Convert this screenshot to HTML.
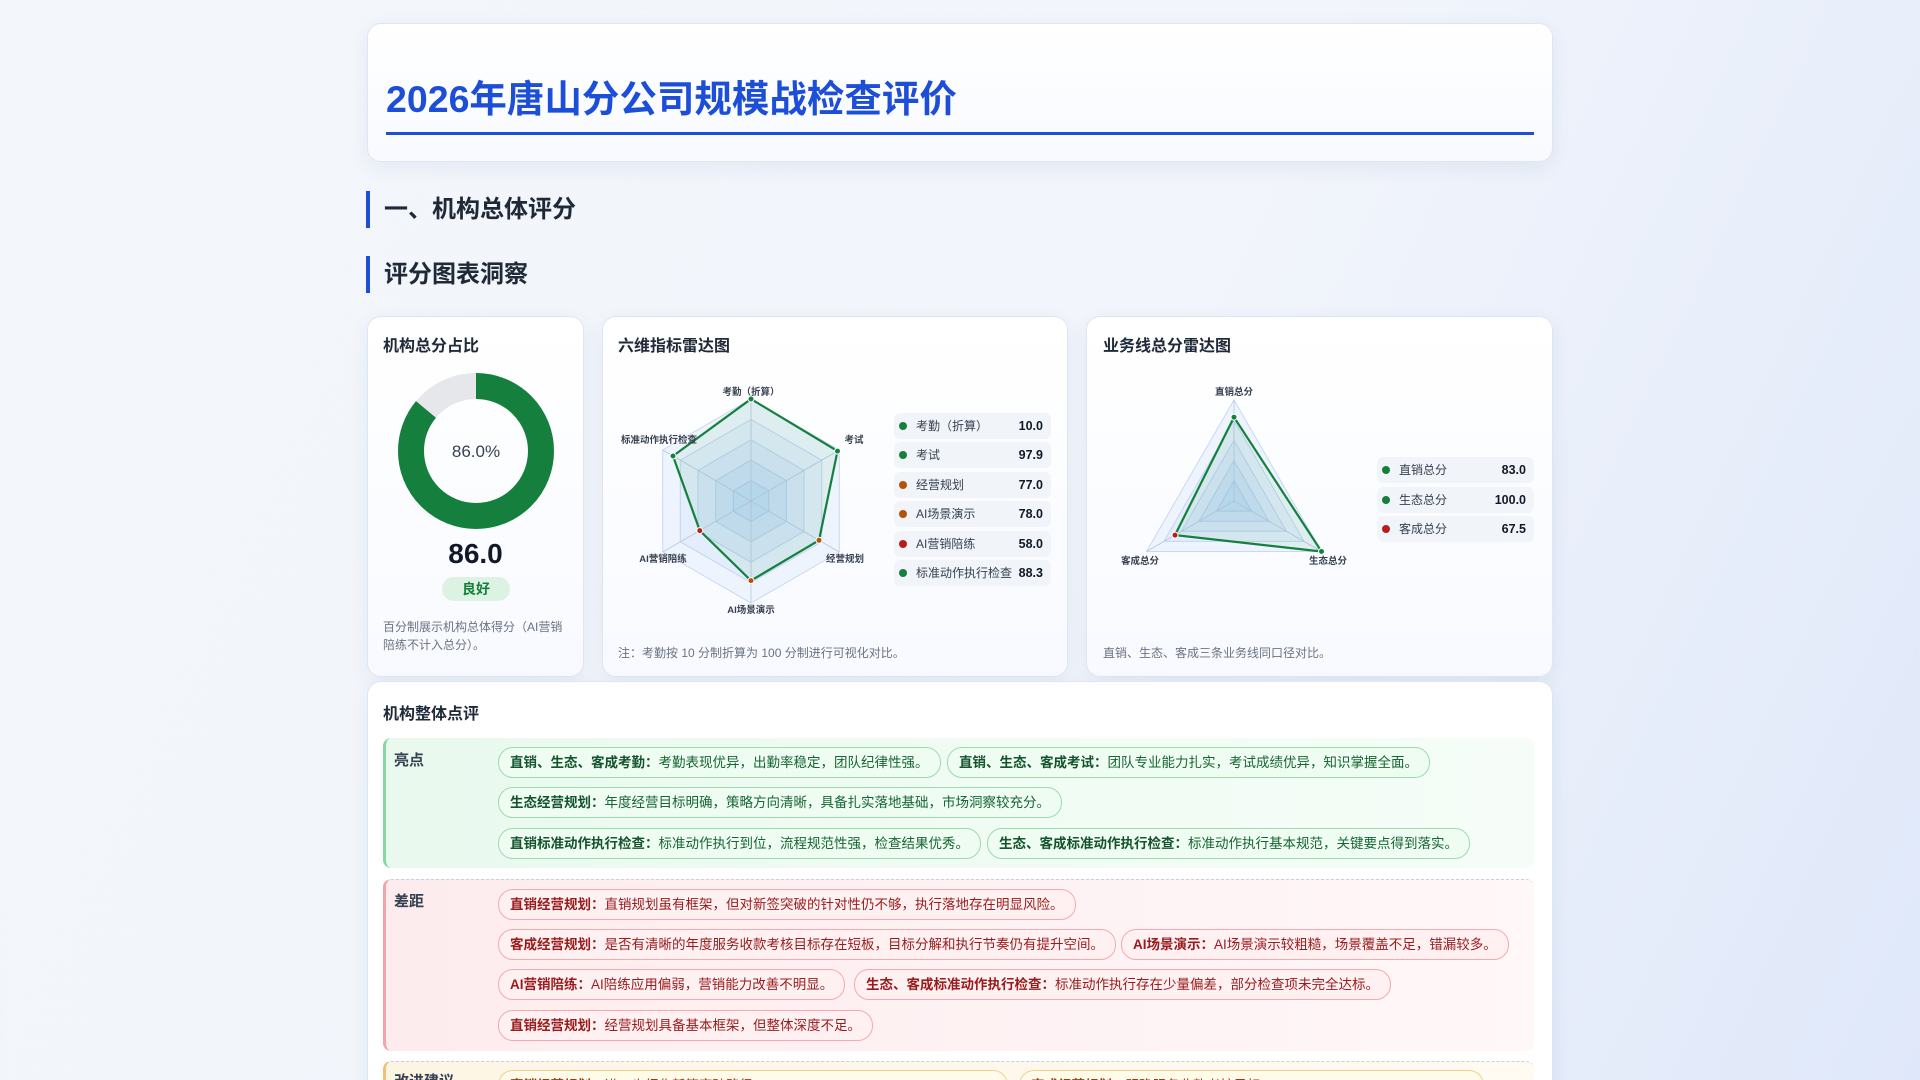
<!DOCTYPE html>
<html><head><meta charset="utf-8">
<style>
*{box-sizing:border-box;margin:0;padding:0}
html{width:1920px;height:1080px;overflow:hidden}
body{width:1920px;height:1080px;overflow:hidden;font-family:"Liberation Sans","Noto Sans CJK SC",sans-serif;background:linear-gradient(115deg,#f3f6fb 0%,#f2f5fb 55%,#dfe8fa 100%);color:#1f2937;position:relative}
.card{position:absolute;background:linear-gradient(180deg,#fff,#f8faff);border:1px solid #dde6f5;border-radius:14px;box-shadow:0 6px 20px rgba(30,60,120,.07)}
.h1{position:absolute;left:386px;top:68px;font-size:37.5px;font-weight:700;color:#1d4ed8}
.uline{position:absolute;left:386px;top:132px;width:1148px;height:3px;background:#1d4ed8}
.sec{position:absolute;left:366px;height:37px;border-left:4px solid #1d4ed8;padding-left:14px;font-size:24px;font-weight:700;color:#1f2937;line-height:37px}
.ct{position:absolute;font-size:16px;font-weight:700;color:#1f2937}
.note{position:absolute;font-size:12px;color:#6b7280;line-height:18px}
.lg{position:absolute;height:26px;background:#f1f4f9;border-radius:6px;font-size:12px;color:#374151;line-height:26px;padding-left:22px}
.lg i{position:absolute;left:5px;top:9px;width:8px;height:8px;border-radius:50%}
.lg b{position:absolute;right:8px;top:0;font-size:12.5px;color:#111827}
.blk{position:absolute;left:383px;width:1151px;border-radius:8px}
.lab{position:absolute;left:11px;font-size:15px;font-weight:700;color:#374151}
.pill{position:absolute;height:31px;border-radius:15px;font-size:13.5px;line-height:29px;padding:0 11px;white-space:nowrap}
.g{background:#eefcf2;border:1px solid #9bdcae;color:#166534}
.g b{color:#14532d}
.r{background:#fff0f1;border:1px solid #f5a9ae;color:#991b1b}
.r b{color:#991b1b}
.y{background:#fffbeb;border:1px solid #f0d089;color:#92400e}
</style></head><body>

<div class="card" style="left:367px;top:23px;width:1186px;height:139px"></div>
<div class="h1">2026年唐山分公司规模战检查评价</div>
<div class="uline"></div>

<div class="sec" style="top:191px">一、机构总体评分</div>
<div class="sec" style="top:256px">评分图表洞察</div>

<div class="card" style="left:367px;top:316px;width:217px;height:361px"></div>
<div class="ct" style="left:383px;top:332px">机构总分占比</div>
<svg style="position:absolute;left:396px;top:371px" width="160" height="160">
<circle cx="80" cy="80" r="65" fill="none" stroke="#e5e7eb" stroke-width="26"/>
<circle cx="80" cy="80" r="65" fill="none" stroke="#15803d" stroke-width="26" stroke-dasharray="351.2 408.4" transform="rotate(-90 80 80)"/>
<text x="80" y="86" text-anchor="middle" font-size="17" fill="#374151" font-family="Liberation Sans,sans-serif">86.0%</text>
</svg>
<div style="position:absolute;left:367px;width:217px;top:538px;text-align:center;font-size:28px;font-weight:700;color:#111827">86.0</div>
<div style="position:absolute;left:442px;top:577px;width:68px;height:24px;border-radius:12px;background:#dcf3e3;color:#15803d;font-size:14px;font-weight:700;text-align:center;line-height:24px">良好</div>
<div class="note" style="left:383px;top:618px;width:190px">百分制展示机构总体得分（AI营销陪练不计入总分）。</div>

<div class="card" style="left:602px;top:316px;width:466px;height:361px"></div>
<div class="ct" style="left:618px;top:332px">六维指标雷达图</div>
<svg style="position:absolute;left:601px;top:371px" width="300" height="260">
<g transform="translate(150,130)" font-size="9.5" fill="#374151" font-family="Liberation Sans,Noto Sans CJK SC,sans-serif" font-weight="700">
<polygon points="0,-102 88.3,-51 88.3,51 0,102 -88.3,51 -88.3,-51" fill="#eef4fd" stroke="#c8d8f2"/>
<polygon points="0,-81.6 70.7,-40.8 70.7,40.8 0,81.6 -70.7,40.8 -70.7,-40.8" fill="#e3edfb" stroke="#c3d5f1"/>
<polygon points="0,-61.2 53,-30.6 53,30.6 0,61.2 -53,30.6 -53,-30.6" fill="#d8e7fa" stroke="#bcd1f0"/>
<polygon points="0,-40.8 35.3,-20.4 35.3,20.4 0,40.8 -35.3,20.4 -35.3,-20.4" fill="#cde0f8" stroke="#b5cdef"/>
<polygon points="0,-20.4 17.7,-10.2 17.7,10.2 0,20.4 -17.7,10.2 -17.7,-10.2" fill="#c3dbf7" stroke="#b0c9ee"/>
<g stroke="#b8c6dc" stroke-width="0.8"><line x1="0" y1="0" x2="0" y2="-102"/><line x1="0" y1="0" x2="88.3" y2="-51"/><line x1="0" y1="0" x2="88.3" y2="51"/><line x1="0" y1="0" x2="0" y2="102"/><line x1="0" y1="0" x2="-88.3" y2="51"/><line x1="0" y1="0" x2="-88.3" y2="-51"/></g>
<polygon points="0,-102 86.5,-49.9 68,39.3 0,79.6 -51.2,29.6 -78,-45" fill="rgba(34,160,90,0.08)" stroke="#15803d" stroke-width="2.2"/>
<g stroke="#fff" stroke-width="1"><circle cx="0" cy="-102" r="3" fill="#15803d"/><circle cx="86.5" cy="-49.9" r="3" fill="#15803d"/><circle cx="68" cy="39.3" r="3" fill="#b45309"/><circle cx="0" cy="79.6" r="3" fill="#b45309"/><circle cx="-51.2" cy="29.6" r="3" fill="#b91c1c"/><circle cx="-78" cy="-45" r="3" fill="#15803d"/></g>
<text x="0" y="-106" text-anchor="middle">考勤（折算）</text>
<text x="103" y="-58" text-anchor="middle">考试</text>
<text x="94" y="61" text-anchor="middle">经营规划</text>
<text x="0" y="112" text-anchor="middle">AI场景演示</text>
<text x="-88" y="61" text-anchor="middle">AI营销陪练</text>
<text x="-92" y="-58" text-anchor="middle">标准动作执行检查</text>
</g></svg>
<div class="lg" style="left:894px;top:413px;width:157px"><i style="background:#15803d"></i>考勤（折算）<b>10.0</b></div>
<div class="lg" style="left:894px;top:442px;width:157px"><i style="background:#15803d"></i>考试<b>97.9</b></div>
<div class="lg" style="left:894px;top:472px;width:157px"><i style="background:#b45309"></i>经营规划<b>77.0</b></div>
<div class="lg" style="left:894px;top:501px;width:157px"><i style="background:#b45309"></i>AI场景演示<b>78.0</b></div>
<div class="lg" style="left:894px;top:531px;width:157px"><i style="background:#b91c1c"></i>AI营销陪练<b>58.0</b></div>
<div class="lg" style="left:894px;top:560px;width:157px"><i style="background:#15803d"></i>标准动作执行检查<b>88.3</b></div>
<div class="note" style="left:618px;top:644px">注：考勤按 10 分制折算为 100 分制进行可视化对比。</div>

<div class="card" style="left:1086px;top:316px;width:467px;height:361px"></div>
<div class="ct" style="left:1103px;top:332px">业务线总分雷达图</div>
<svg style="position:absolute;left:1084px;top:371px" width="300" height="260">
<g transform="translate(150,130)" font-size="9.5" fill="#374151" font-family="Liberation Sans,Noto Sans CJK SC,sans-serif" font-weight="700">
<polygon points="0,-101 87.5,50.5 -87.5,50.5" fill="#eef4fd" stroke="#c8d8f2"/>
<polygon points="0,-80.8 70,40.4 -70,40.4" fill="#e3edfb" stroke="#c3d5f1"/>
<polygon points="0,-60.6 52.5,30.3 -52.5,30.3" fill="#d8e7fa" stroke="#bcd1f0"/>
<polygon points="0,-40.4 35,20.2 -35,20.2" fill="#cde0f8" stroke="#b5cdef"/>
<polygon points="0,-20.2 17.5,10.1 -17.5,10.1" fill="#c3dbf7" stroke="#b0c9ee"/>
<g stroke="#b8c6dc" stroke-width="0.8"><line x1="0" y1="0" x2="0" y2="-101"/><line x1="0" y1="0" x2="87.5" y2="50.5"/><line x1="0" y1="0" x2="-87.5" y2="50.5"/></g>
<polygon points="0,-83.8 87.5,50.5 -59,34.1" fill="rgba(34,160,90,0.08)" stroke="#15803d" stroke-width="2.2"/>
<g stroke="#fff" stroke-width="1"><circle cx="0" cy="-83.8" r="3" fill="#15803d"/><circle cx="87.5" cy="50.5" r="3" fill="#15803d"/><circle cx="-59" cy="34.1" r="3" fill="#b91c1c"/></g>
<text x="0" y="-106" text-anchor="middle">直销总分</text>
<text x="94" y="63" text-anchor="middle">生态总分</text>
<text x="-94" y="63" text-anchor="middle">客成总分</text>
</g></svg>
<div class="lg" style="left:1377px;top:457px;width:157px"><i style="background:#15803d"></i>直销总分<b>83.0</b></div>
<div class="lg" style="left:1377px;top:487px;width:157px"><i style="background:#15803d"></i>生态总分<b>100.0</b></div>
<div class="lg" style="left:1377px;top:516px;width:157px"><i style="background:#b91c1c"></i>客成总分<b>67.5</b></div>
<div class="note" style="left:1103px;top:644px">直销、生态、客成三条业务线同口径对比。</div>

<div class="card" style="left:367px;top:681px;width:1186px;height:420px;background:#fff"></div>
<div class="ct" style="left:383px;top:700px">机构整体点评</div>

<div class="blk" style="top:738px;height:130px;background:linear-gradient(90deg,#e9f9ee,#f6fdf8);border-left:3px solid #86d8a0"></div>
<div class="lab" style="left:394px;top:749px">亮点</div>
<div class="pill g" style="left:498px;top:747px"><b>直销、生态、客成考勤：</b>考勤表现优异，出勤率稳定，团队纪律性强。</div>
<div class="pill g" style="left:947px;top:747px"><b>直销、生态、客成考试：</b>团队专业能力扎实，考试成绩优异，知识掌握全面。</div>
<div class="pill g" style="left:498px;top:787px"><b>生态经营规划：</b>年度经营目标明确，策略方向清晰，具备扎实落地基础，市场洞察较充分。</div>
<div class="pill g" style="left:498px;top:828px"><b>直销标准动作执行检查：</b>标准动作执行到位，流程规范性强，检查结果优秀。</div>
<div class="pill g" style="left:987px;top:828px"><b>生态、客成标准动作执行检查：</b>标准动作执行基本规范，关键要点得到落实。</div>

<div class="blk" style="top:879px;height:172px;background:linear-gradient(90deg,#fdecee,#fff7f8);border-left:3px solid #f3a3aa;border-top:1px dashed #c8cfe0"></div>
<div class="lab" style="left:394px;top:890px">差距</div>
<div class="pill r" style="left:498px;top:889px"><b>直销经营规划：</b>直销规划虽有框架，但对新签突破的针对性仍不够，执行落地存在明显风险。</div>
<div class="pill r" style="left:498px;top:929px"><b>客成经营规划：</b>是否有清晰的年度服务收款考核目标存在短板，目标分解和执行节奏仍有提升空间。</div>
<div class="pill r" style="left:1121px;top:929px"><b>AI场景演示：</b>AI场景演示较粗糙，场景覆盖不足，错漏较多。</div>
<div class="pill r" style="left:498px;top:969px"><b>AI营销陪练：</b>AI陪练应用偏弱，营销能力改善不明显。</div>
<div class="pill r" style="left:854px;top:969px"><b>生态、客成标准动作执行检查：</b>标准动作执行存在少量偏差，部分检查项未完全达标。</div>
<div class="pill r" style="left:498px;top:1010px"><b>直销经营规划：</b>经营规划具备基本框架，但整体深度不足。</div>

<div class="blk" style="top:1061px;height:40px;background:linear-gradient(90deg,#fdf5e4,#fffbf2);border-left:3px solid #f0c074;border-top:1px dashed #c8cfe0"></div>
<div class="lab" style="left:394px;top:1070px">改进建议</div>
<div class="pill y" style="left:498px;top:1070px;width:510px"><b>直销经营规划：</b>进一步细化新签突破路径</div>
<div class="pill y" style="left:1019px;top:1070px;width:465px"><b>客成经营规划：</b>明确服务收款考核目标</div>

</body></html>
